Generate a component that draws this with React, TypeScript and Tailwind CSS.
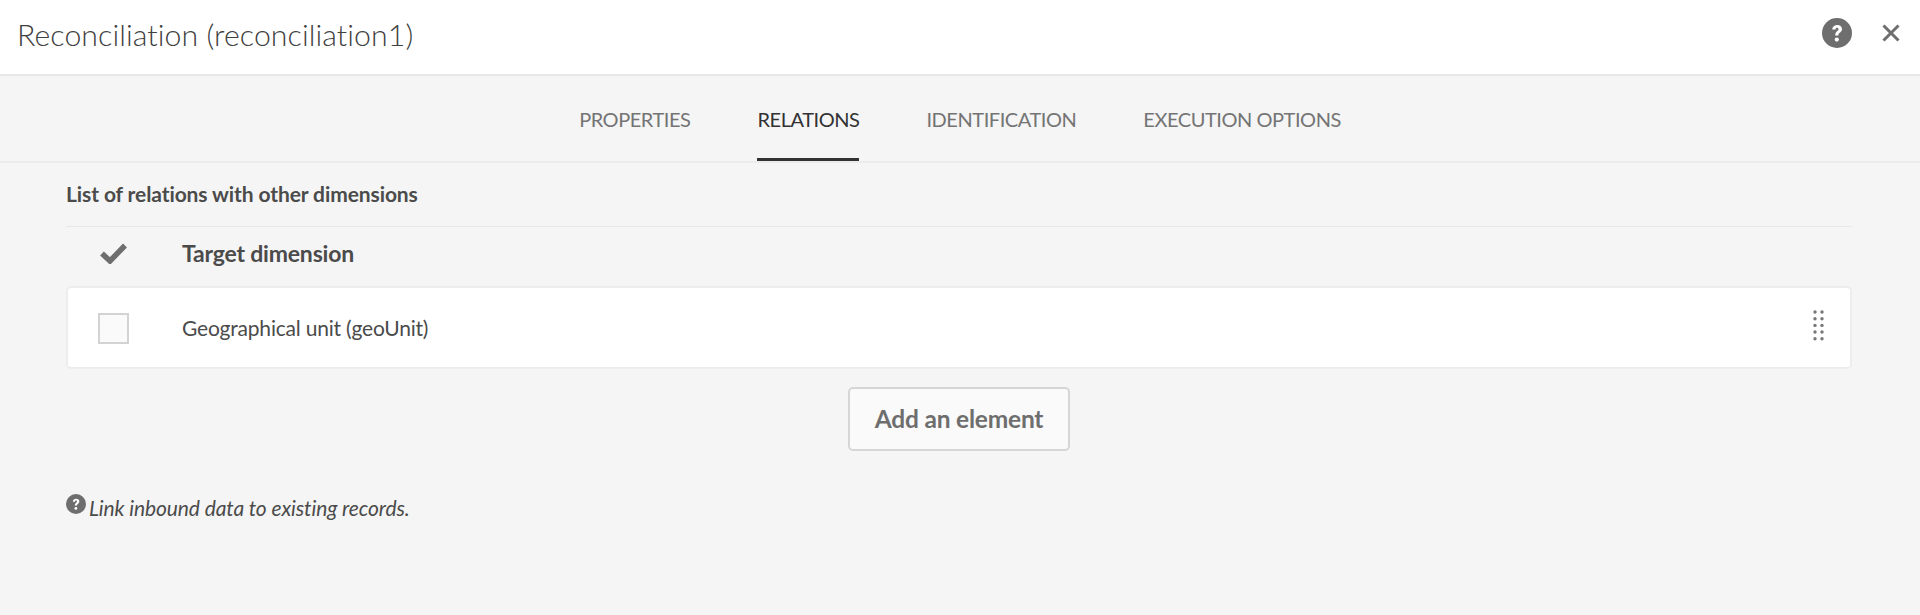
import React from 'react';

const FONT = 'font-["Lato","Open_Sans",sans-serif]';
const TABS = ['PROPERTIES', 'RELATIONS', 'IDENTIFICATION', 'EXECUTION OPTIONS'];

const HelpIcon: React.FC<{ size: number }> = ({ size }) => (
  <svg width={size} height={size} viewBox="0 0 30 30" className="shrink-0">
    <circle cx="15" cy="15" r="15" fill="#6e6e6e" />
    <path d="M10.2 11.6c.2-3 2.300-4.600 5-4.600 2.800 0 4.800 1.600 4.800 4.100 0 3.400-3.600 3.500-3.600 6.300h-3.200c0-4.300 3.300-4.300 3.300-6.200 0-.9-.6-1.500-1.400-1.500-.9 0-1.500.6-1.600 1.900z" fill="#fff" />
    <circle cx="14.800" cy="21.600" r="2.100" fill="#fff" />
  </svg>
);

const Tab: React.FC<{ label: string; active: boolean }> = ({ label, active }) => (
  <div className={`h-[85px] flex items-center border-b-[3px] pt-[4px] text-[20px] tracking-[-0.45px] ${active ? 'border-[#323232] text-[#323232]' : 'border-transparent text-[#747474]'}`}>
    {label}
  </div>
);

export default function App() {
  return (
    <div className={`${FONT} w-full h-[615px] overflow-hidden bg-[#f5f5f5] text-[#323232]`}>
      <header className="h-[76px] bg-white border-b-2 border-[#e8e8e8] flex items-center justify-between pl-[17px] pr-[20px]">
        <h1 className="text-[30.250px] font-light text-[#404040] tracking-[0.08px] pb-[5px]">Reconciliation (reconciliation1)</h1>
        <div className="flex items-center gap-[30px] pb-[8px]">
          <HelpIcon size={30} />
          <svg width="18" height="18" viewBox="0 0 18 18">
            <path d="M1.500 1.500l15 15M16.500 1.500l-15 15" stroke="#6e6e6e" strokeWidth="3" fill="none" />
          </svg>
        </div>
      </header>

      <nav className="flex justify-center gap-[67px] border-b-2 border-[#ebebeb] h-[87px]">
        {TABS.map((t) => (
          <Tab key={t} label={t} active={t === 'RELATIONS'} />
        ))}
      </nav>

      <main className="pl-[66px] pr-[68px]">
        <div className="h-[64px] flex items-center border-b border-[#e8e8e8] pb-[2px] text-[21px] font-bold text-[#4b4b4b] tracking-[-0.1px]">
          List of relations with other dimensions
        </div>
        <div className="h-[59px] flex items-center pb-[6px]">
          <div className="w-[116px] flex pl-[34px]">
            <svg width="27" height="21" viewBox="0 0 27 21">
              <path d="M2 10.500l8 7.500L25 2.500" stroke="#6e6e6e" strokeWidth="5.500" fill="none" />
            </svg>
          </div>
          <span className="text-[23px] font-bold text-[#4b4b4b] tracking-[-0.2px]">Target dimension</span>
        </div>
        <div className="h-[83px] bg-white border-2 border-[#ededed] rounded-[5px] flex items-center pr-[25px]">
          <div className="w-[114px] flex pl-[30px] pt-[2px]">
            <div className="w-[31px] h-[31px] bg-[#fafafa] border-2 border-[#d3d3d3]" />
          </div>
          <span className="flex-1 text-[21px] text-[#4b4b4b] tracking-[-0.2px]">Geographical unit (geoUnit)</span>
          <svg width="12" height="32" viewBox="0 0 12 32" fill="#777777" className="mb-[6px]">
            {[3, 9.700, 16.400, 23, 29.700].map((y) => (
              <React.Fragment key={y}>
                <circle cx="2" cy={y} r="1.700" />
                <circle cx="9" cy={y} r="1.700" />
              </React.Fragment>
            ))}
          </svg>
        </div>
        <div className="flex justify-center mt-[18px]">
          <button className="w-[222px] h-[64px] bg-[#fafafa] border-2 border-[#d6d6d6] rounded-[5px] text-[24.500px] font-bold text-[#6e6e6e] tracking-[-0.2px]">
            Add an element
          </button>
        </div>
        <p className="flex items-start gap-[3px] mt-[42px] text-[21px] leading-[30px] italic text-[#4b4b4b] tracking-[-0.1px]">
          <span className="pt-[1px]"><HelpIcon size={20} /></span>
          Link inbound data to existing records.
        </p>
      </main>
    </div>
  );
}
